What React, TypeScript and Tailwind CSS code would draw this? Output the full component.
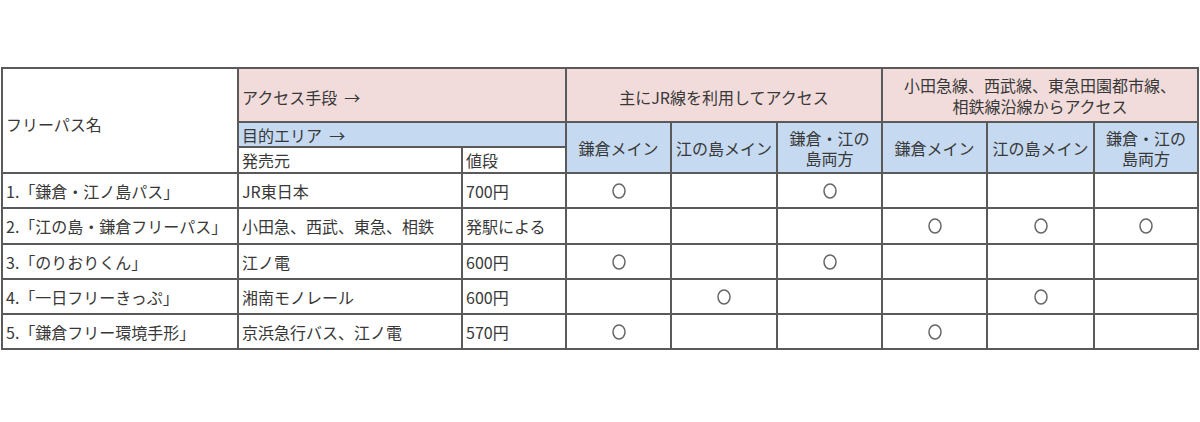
const font = { fontFamily: '"Noto Sans CJK JP", "Noto Sans", sans-serif' };

type Row = { name: string; seller: string; price: string; marks: boolean[] };

const rows: Row[] = [
  { name: "1.「鎌倉・江ノ島パス」", seller: "JR東日本", price: "700円", marks: [true, false, true, false, false, false] },
  { name: "2.「江の島・鎌倉フリーパス」", seller: "小田急、西武、東急、相鉄", price: "発駅による", marks: [false, false, false, true, true, true] },
  { name: "3.「のりおりくん」", seller: "江ノ電", price: "600円", marks: [true, false, true, false, false, false] },
  { name: "4.「一日フリーきっぷ」", seller: "湘南モノレール", price: "600円", marks: [false, true, false, false, true, false] },
  { name: "5.「鎌倉フリー環境手形」", seller: "京浜急行バス、江ノ電", price: "570円", marks: [true, false, false, true, false, false] },
];

const areaHeaders = [
  ["鎌倉メイン"],
  ["江の島メイン"],
  ["鎌倉・江の", "島両方"],
  ["鎌倉メイン"],
  ["江の島メイン"],
  ["鎌倉・江の", "島両方"],
];

function Mark() {
  return (
    <svg width="16" height="18" viewBox="0 0 16 18">
      <ellipse cx="8" cy="9" rx="6" ry="7" fill="none" stroke="#666" strokeWidth="1.5" />
    </svg>
  );
}

export default function App() {
  return (
    <div className="w-[1200px] h-[422px] bg-white text-[16px] text-[#383838]" style={font}>
      <div className="pt-[67px] pl-[1px]">
        <div className="grid w-fit grid-cols-[234px_222px_102px_103px_104px_103px_103px_105px_102px] grid-rows-[52px_23px_24px_33px_34px_33px_33px_33px] gap-[2px] bg-[#5a5a5a] p-[2px] leading-[20px]">
          <div className="row-span-3 flex items-center bg-white pl-[3px] pt-[6px]">フリーパス名</div>
          <div className="col-span-2 flex items-center bg-[#f2dcdb] pl-[3px] pt-[4px] whitespace-pre">アクセス手段  →</div>
          <div className="col-span-3 flex items-center justify-center bg-[#f2dcdb] pt-[4px]">主にJR線を利用してアクセス</div>
          <div className="col-span-3 flex items-center justify-center bg-[#f2dcdb] pt-[2px]">
            <p className="text-center leading-[21px]">
              小田急線、西武線、東急田園都市線、
              <br />
              相鉄線沿線からアクセス
            </p>
          </div>

          <div className="col-span-2 flex items-center bg-[#c5d9f1] pl-[3px] whitespace-pre">目的エリア  →</div>
          {areaHeaders.map((lines, i) => (
            <div key={i} className="row-span-2 flex items-center justify-center bg-[#c5d9f1]">
              <p className="text-center">
                {lines[0]}
                {lines[1] && (
                  <>
                    <br />
                    {lines[1]}
                  </>
                )}
              </p>
            </div>
          ))}
          <div className="flex items-center bg-white pl-[3px]">発売元</div>
          <div className="flex items-center bg-white pl-[3px]">値段</div>

          {rows.map((r) => (
            <>
              <div key={r.name} className="flex items-center bg-white pl-[3px] whitespace-nowrap">{r.name}</div>
              <div className="flex items-center bg-white pl-[3px] whitespace-nowrap">{r.seller}</div>
              <div className="flex items-center bg-white pl-[3px] whitespace-nowrap">{r.price}</div>
              {r.marks.map((m, j) => (
                <div key={j} className="flex items-center justify-center bg-white">
                  {m && <Mark />}
                </div>
              ))}
            </>
          ))}
        </div>
      </div>
    </div>
  );
}
